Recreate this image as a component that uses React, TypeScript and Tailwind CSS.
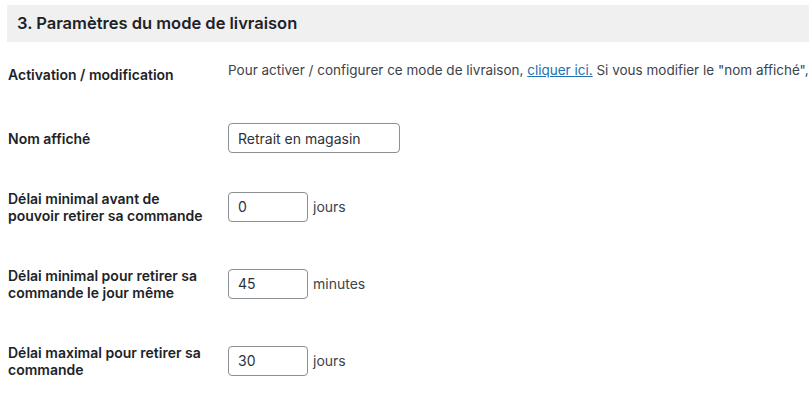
import React from 'react';

type Row = {
  label: string;
  value: string;
  unit?: string;
  wide?: boolean;
};

const rows: Row[] = [
  { label: 'Nom affiché', value: 'Retrait en magasin', wide: true },
  { label: 'Délai minimal avant de pouvoir retirer sa commande', value: '0', unit: 'jours' },
  { label: 'Délai minimal pour retirer sa commande le jour même', value: '45', unit: 'minutes' },
  { label: 'Délai maximal pour retirer sa commande', value: '30', unit: 'jours' },
];

const App: React.FC = () => {
  return (
    <div className="w-[809px] h-[399px] overflow-hidden bg-white font-['Inter',sans-serif] text-[14px] text-[#1d2327]">
      <div className="pt-[5px] pl-[7px]">
        <h2 className="bg-[#f0f0f1] h-[37px] w-[802px] flex items-center pl-[10px] text-[16.5px] font-semibold text-[#1d2327]">
          3. Paramètres du mode de livraison
        </h2>
      </div>

      <div className="pl-[8px]">
        {/* activation row */}
        <div className="flex h-[60px] mt-[6px]">
          <div className="w-[220px] shrink-0 pt-[18px] font-semibold leading-[18px] whitespace-nowrap">Activation / modification</div>
          <div className="pt-[13px] leading-[18px] whitespace-nowrap text-[13.5px] text-[#3c434a]">
            Pour activer / configurer ce mode de livraison,{' '}
            <a href="#" className="text-[#2271b1] underline">cliquer ici.</a>{' '}
            Si vous modifier le "nom affiché",
          </div>
        </div>

        {rows.map((row) => (
          <div key={row.label} className={`flex items-center ${row.wide ? 'h-[60px]' : 'h-[77px]'}`}>
            <div className="w-[220px] shrink-0 pr-[20px] font-semibold leading-[17px]">{row.label}</div>
            <div className="flex items-center gap-[5px]">
              <input
                readOnly
                value={row.value}
                className={`${row.wide ? 'w-[172px]' : 'w-[80px]'} h-[30px] rounded-[4px] border border-[#8c8f94] px-[9px] text-[14px] text-[#2c3338] outline-none`}
              />
              {row.unit && <span className="text-[#3c434a]">{row.unit}</span>}
            </div>
          </div>
        ))}
      </div>
    </div>
  );
};

export default App;
